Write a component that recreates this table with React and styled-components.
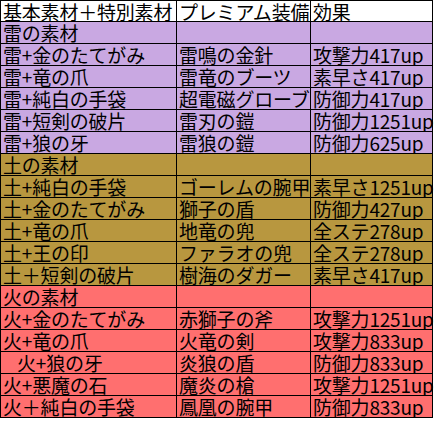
import React from "react";
import styled, { createGlobalStyle } from "styled-components";

const Global = createGlobalStyle`
  html, body { margin: 0; padding: 0; background: #ffffff; }
  body { font-family: "Noto Sans CJK JP", "Noto Sans", sans-serif; }
`;

const COLORS = {
  header: "#ffffff",
  thunder: "#c9a8e2",
  earth: "#b8973f",
  fire: "#ff6f6f",
};

const Grid = styled.div`
  display: grid;
  grid-template-columns: 176px 134px 122px;
  grid-template-rows: 21px;
  grid-auto-rows: 22px;
  width: 433px;
  box-sizing: border-box;
  border-left: 1px solid #000;
  border-top: 1px solid #000;
`;

const Cell = styled.div`
  box-sizing: border-box;
  border-right: 1px solid #000;
  border-bottom: 1px solid #000;
  background: ${(p) => COLORS[p.$tone]};
  color: #000;
  font-family: "Noto Sans CJK JP", "Noto Sans", sans-serif;
  font-size: 19px;
  line-height: 21px;
  padding-left: ${(p) => (p.$indent ? 16 : 2)}px;
  white-space: nowrap;
  letter-spacing: -0.2px;
  display: flex;
  align-items: center;
`;

const groups = [
  {
    tone: "thunder",
    title: "雷の素材",
    rows: [
      ["雷+金のたてがみ", "雷鳴の金針", "攻撃力417up"],
      ["雷+竜の爪", "雷竜のブーツ", "素早さ417up"],
      ["雷+純白の手袋", "超電磁グローブ", "防御力417up"],
      ["雷+短剣の破片", "雷刃の鎧", "防御力1251up"],
      ["雷+狼の牙", "雷狼の鎧", "防御力625up"],
    ],
  },
  {
    tone: "earth",
    title: "土の素材",
    rows: [
      ["土+純白の手袋", "ゴーレムの腕甲", "素早さ1251up"],
      ["土+金のたてがみ", "獅子の盾", "防御力427up"],
      ["土+竜の爪", "地竜の兜", "全ステ278up"],
      ["土+王の印", "ファラオの兜", "全ステ278up"],
      ["土＋短剣の破片", "樹海のダガー", "素早さ417up"],
    ],
  },
  {
    tone: "fire",
    title: "火の素材",
    rows: [
      ["火+金のたてがみ", "赤獅子の斧", "攻撃力1251up"],
      ["火+竜の爪", "火竜の剣", "攻撃力833up"],
      ["火+狼の牙", "炎狼の盾", "防御力833up", true],
      ["火+悪魔の石", "魔炎の槍", "攻撃力1251up"],
      ["火＋純白の手袋", "鳳凰の腕甲", "防御力833up"],
    ],
  },
];

export default function App() {
  return (
    <>
      <Global />
      <Grid>
        <Cell $tone="header">基本素材＋特別素材</Cell>
        <Cell $tone="header">プレミアム装備</Cell>
        <Cell $tone="header">効果</Cell>
        {groups.map((g) => (
          <React.Fragment key={g.title}>
            <Cell $tone={g.tone}>{g.title}</Cell>
            <Cell $tone={g.tone} />
            <Cell $tone={g.tone} />
            {g.rows.map(([a, b, c, indent]) => (
              <React.Fragment key={a}>
                <Cell $tone={g.tone} $indent={indent}>{a}</Cell>
                <Cell $tone={g.tone}>{b}</Cell>
                <Cell $tone={g.tone}>{c}</Cell>
              </React.Fragment>
            ))}
          </React.Fragment>
        ))}
      </Grid>
    </>
  );
}
